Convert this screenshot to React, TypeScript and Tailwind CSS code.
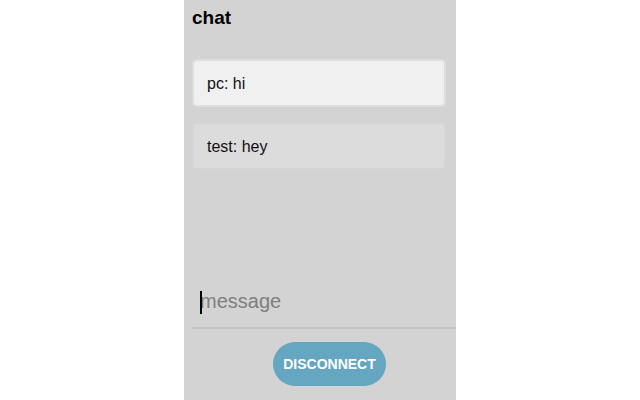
import { useState } from 'react';

const MESSAGES = [
  { id: 1, user: 'pc', text: 'hi', active: true },
  { id: 2, user: 'test', text: 'hey', active: false },
];

export default function App() {
  const [message, setMessage] = useState('');

  return (
    <div className="flex h-[400px] w-[640px] justify-center bg-white font-['Liberation_Sans',Arial,sans-serif]">
      <div className="flex h-full w-[272px] flex-col bg-[#d3d3d3] pl-2">
        <h1 className="pt-[7px] text-[19px] font-bold leading-[22px] text-black">chat</h1>
        <div className="mt-[30px] flex w-[254px] flex-col gap-[15px]">
          {MESSAGES.map((m) => (
            <div
              key={m.id}
              className={`flex h-[48px] items-center rounded-[5px] border-2 px-[13px] pt-[2px] text-[16px] text-[#111] ${
                m.active ? 'border-[#dedede] bg-[#f0f0f0]' : 'border-[#d5d5d5] bg-[#dcdcdc]'
              }`}
            >
              {m.user}: {m.text}
            </div>
          ))}
        </div>
        <div className="flex-1" />
        <div className="relative">
          <input
            autoFocus
            value={message}
            onChange={(e) => setMessage(e.target.value)}
            placeholder="message"
            className="h-[56px] w-full border-b-2 border-[#c4c4c4] bg-transparent pl-2 pt-[2px] text-[20px] text-black caret-black outline-none placeholder:text-[#7f7f7f]"
          />
          {message === '' && (
            <span className="pointer-events-none absolute left-[8px] top-[18px] h-[23px] w-[2px] bg-black" />
          )}
        </div>
        <div className="flex justify-center pt-[13px] pb-[14px] pl-[11px]">
          <button
            type="button"
            className="h-[44px] w-[113px] rounded-full bg-[#65a6c1] text-[14px] font-bold text-white"
          >
            DISCONNECT
          </button>
        </div>
      </div>
    </div>
  );
}
